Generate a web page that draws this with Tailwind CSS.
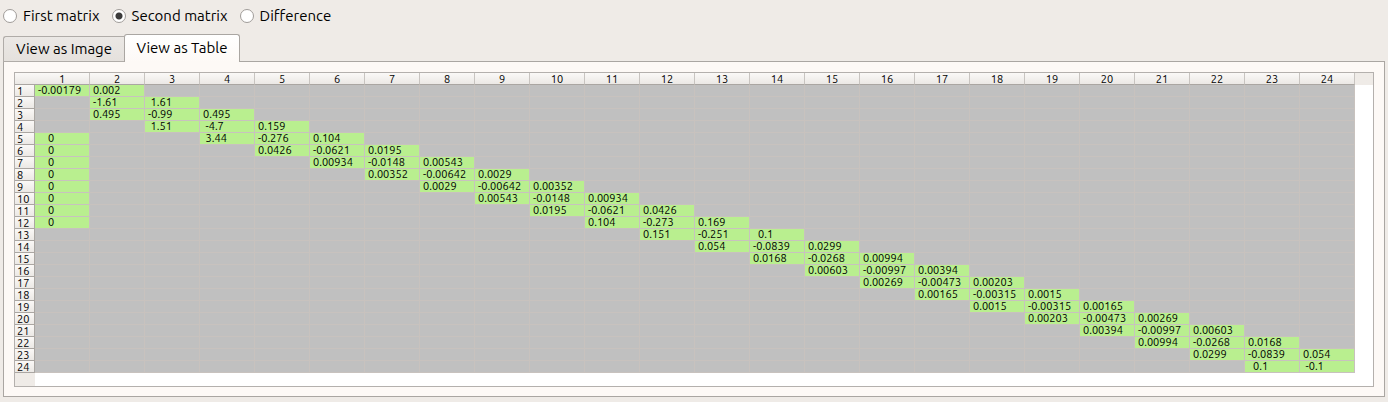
<!DOCTYPE html>
<html lang="en">
<head>
<meta charset="utf-8">
<title>Matrix viewer</title>
<script src="https://cdn.jsdelivr.net/npm/@tailwindcss/browser@4"></script>
</head>
<body class="flex min-h-screen flex-col bg-[#efebe7] px-[3px] pb-[5px] font-['Ubuntu','Noto_Sans',sans-serif] text-[15px] text-black">
  <div role="radiogroup" aria-label="Matrix" class="mb-0.5 flex h-8 items-center gap-3 whitespace-nowrap">
    <label class="flex items-center gap-1.5"><input type="radio" name="matrix" class="size-3.5 appearance-none rounded-full border border-[#a09c99] bg-white checked:bg-[radial-gradient(circle,#3c3c3c_0_3px,#ffffff_4px)]">First matrix</label>
    <label class="flex items-center gap-1.5"><input type="radio" name="matrix" checked class="size-3.5 appearance-none rounded-full border border-[#a09c99] bg-white checked:bg-[radial-gradient(circle,#3c3c3c_0_3px,#ffffff_4px)]">Second matrix</label>
    <label class="flex items-center gap-1.5"><input type="radio" name="matrix" class="size-3.5 appearance-none rounded-full border border-[#a09c99] bg-white checked:bg-[radial-gradient(circle,#3c3c3c_0_3px,#ffffff_4px)]">Difference</label>
  </div>
  <div role="tablist" class="z-10 -mb-px flex h-7 items-end whitespace-nowrap">
    <button role="tab" id="tab-image" aria-selected="false" class="h-[26px] w-[121px] rounded-tl-[3px] border border-r-0 border-[#b0aca8] bg-linear-to-b from-[#ebe8e5] to-[#e5e1dd]">View as Image</button>
    <button role="tab" id="tab-table" aria-selected="true" class="h-7 w-[116px] rounded-t-[3px] border border-b-0 border-[#aaa6a2] bg-linear-to-b from-white to-[#fdf9f6]">View as Table</button>
  </div>
  <main role="tabpanel" aria-labelledby="tab-table" class="flex grow flex-col border border-[#aaa6a2] bg-[#fdf9f6] p-2.5 pb-[9px]">
    <div class="flex grow flex-col overflow-hidden border border-[#b4b0ad] bg-white">
      <div class="flex bg-linear-to-b from-[#efebe7] to-[#efebe7] bg-[length:100%_12px] bg-no-repeat">
        <table class="w-[1340px] shrink-0 table-fixed border-separate border-spacing-0 text-[11px] leading-[11px]">
          <thead><tr id="head"></tr></thead>
          <tbody id="body"></tbody>
        </table>
      </div>
      <div class="w-5 grow bg-[#efebe7]"></div>
    </div>
  </main>
<script>
const rows = [
  [1, '-0.00179', '0.002'],
  [2, '-1.61', '1.61'],
  [2, '0.495', '-0.99', '0.495'],
  [3, '1.51', '-4.7', '0.159'],
  [4, '3.44', '-0.276', '0.104'],
  [5, '0.0426', '-0.0621', '0.0195'],
  [6, '0.00934', '-0.0148', '0.00543'],
  [7, '0.00352', '-0.00642', '0.0029'],
  [8, '0.0029', '-0.00642', '0.00352'],
  [9, '0.00543', '-0.0148', '0.00934'],
  [10, '0.0195', '-0.0621', '0.0426'],
  [11, '0.104', '-0.273', '0.169'],
  [12, '0.151', '-0.251', '0.1'],
  [13, '0.054', '-0.0839', '0.0299'],
  [14, '0.0168', '-0.0268', '0.00994'],
  [15, '0.00603', '-0.00997', '0.00394'],
  [16, '0.00269', '-0.00473', '0.00203'],
  [17, '0.00165', '-0.00315', '0.0015'],
  [18, '0.0015', '-0.00315', '0.00165'],
  [19, '0.00203', '-0.00473', '0.00269'],
  [20, '0.00394', '-0.00997', '0.00603'],
  [21, '0.00994', '-0.0268', '0.0168'],
  [22, '0.0299', '-0.0839', '0.054'],
  [23, '0.1', '-0.1']
];
const head = document.getElementById('head');
const body = document.getElementById('body');
function add(parent, tag, cls, text) {
  const el = document.createElement(tag);
  el.className = cls;
  el.textContent = text;
  parent.appendChild(el);
  return el;
}
add(head, 'td', 'h-3 w-5 border-b border-[#aaa6a2] bg-linear-to-b from-[#fbf9f7] to-[#ebe8e5] p-0', '');
for (let c = 1; c <= 24; c++) {
  add(head, 'th', 'h-3 w-[55px] border-r border-b border-r-[#c8c4c0] border-b-[#aaa6a2] bg-linear-to-b from-[#fbf9f7] to-[#ebe8e5] p-0 pt-0.5 text-center leading-[9px] font-normal', c).scope = 'col';
}
rows.forEach(([start, ...values], i) => {
  const tr = add(body, 'tr', '', '');
  add(tr, 'th', 'h-3 border-r border-b border-[#aaa6a2] bg-linear-to-b from-[#fbf9f7] to-[#ebe8e5] p-0 pt-0.5 pl-0.5 text-left leading-[9px] font-normal', i + 1).scope = 'row';
  for (let c = 1; c <= 24; c++) {
    let v = values[c - start];
    if (c === 1 && i >= 4 && i <= 11) v = '0';
    if (v === undefined) add(tr, 'td', 'h-3 border-r border-b border-[#c8c2be] bg-[#c0c0c0] p-0', '');
    else add(tr, 'td', 'h-3 border-r border-b border-[#c8c2be] bg-[#b9ef8f] p-0 pl-[3px] whitespace-pre', v.padStart(5));
  }
});
</script>
</body>
</html>
